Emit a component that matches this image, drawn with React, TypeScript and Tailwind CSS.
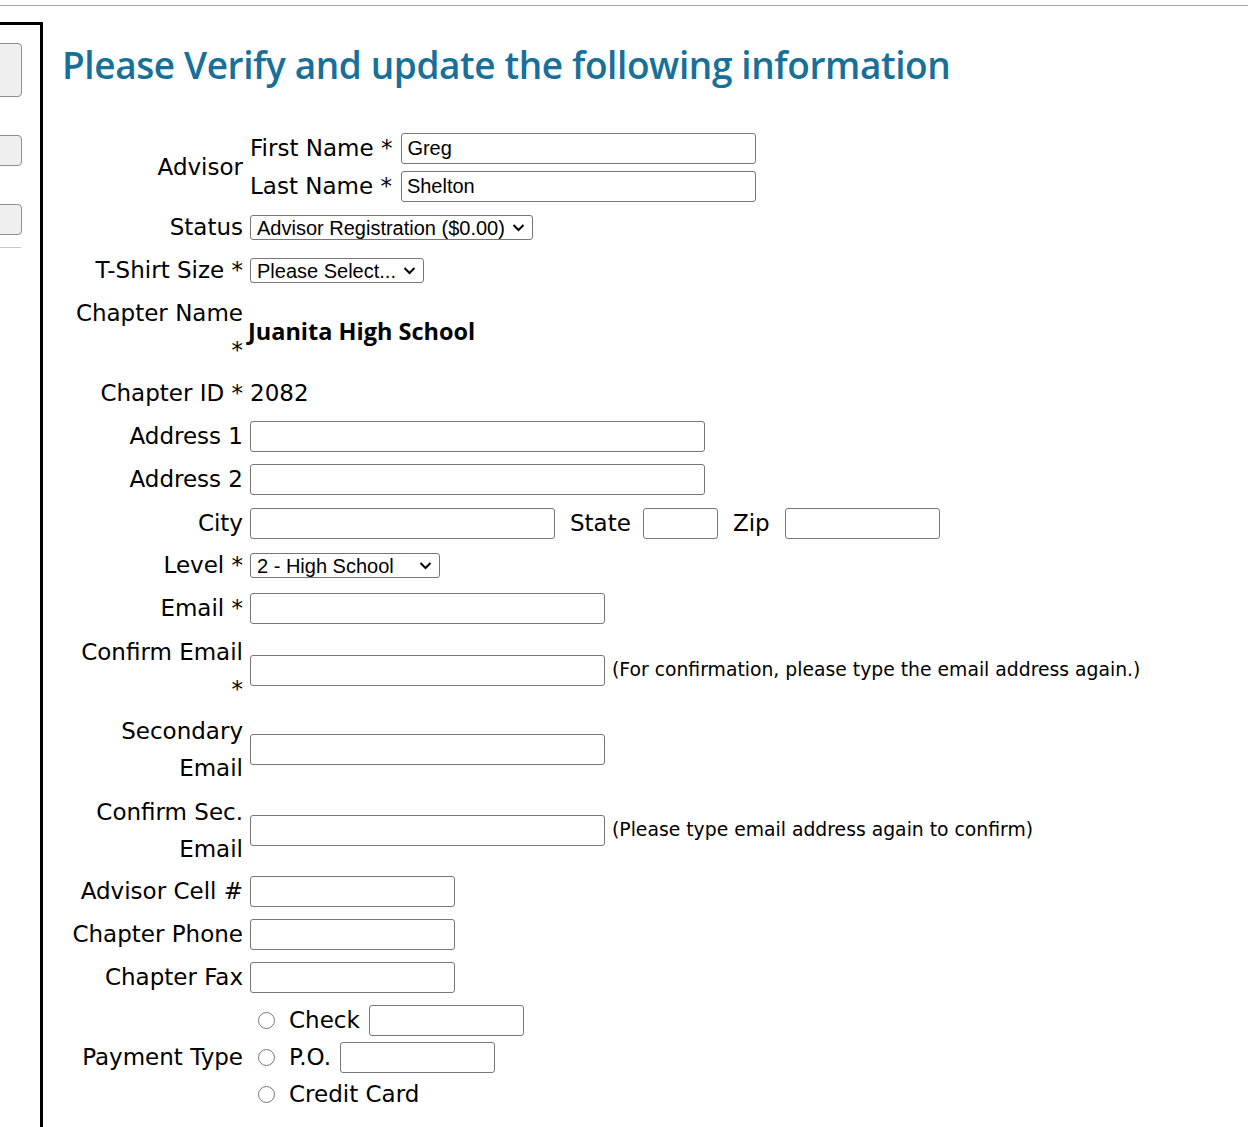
import React from "react";

const LBL = "font-['DejaVu_Sans',sans-serif] text-[23px] text-black";

function Input({ w, value }: { w: string; value?: string }) {
  return (
    <input
      type="text"
      defaultValue={value}
      className={`${w} h-[31px] border border-[#767676] rounded-[3px] bg-white px-[5px] font-['Liberation_Sans',Arial,sans-serif] text-[20px] text-black outline-none`}
    />
  );
}

function Chevron() {
  return (
    <svg width="13" height="9" viewBox="0 0 13 9" className="shrink-0">
      <path d="M1.5 2 L6.5 7 L11.5 2" fill="none" stroke="#000" strokeWidth="2" />
    </svg>
  );
}

function FakeSelect({ w, text }: { w: string; text: string }) {
  return (
    <div
      className={`${w} h-[25px] flex items-center justify-between border border-[#767676] rounded-[3px] bg-white pl-[6px] pr-[7px] font-['Liberation_Sans',Arial,sans-serif] text-[20px] leading-none text-black`}
    >
      <span className="whitespace-nowrap">{text}</span>
      <Chevron />
    </div>
  );
}

function Radio() {
  return <span className="block w-[17px] h-[17px] rounded-full border border-[#767676] bg-white shrink-0" />;
}

function Row({
  h,
  label,
  children,
  labelClass = "",
}: {
  h: string;
  label: React.ReactNode;
  children?: React.ReactNode;
  labelClass?: string;
}) {
  return (
    <div className={`grid grid-cols-[200px_1fr] gap-x-[7px] items-center ${h}`}>
      <div className={`${LBL} text-right whitespace-nowrap ${labelClass}`}>{label}</div>
      <div className="flex items-center min-w-0">{children}</div>
    </div>
  );
}

export default function App() {
  return (
    <div className="w-[1248px] h-[1127px] overflow-hidden bg-white">
      <div className="mt-[5px] h-px bg-[#a6a6a6]" />
      <div className="flex h-[1121px]">
        {/* left sidebar */}
        <div className="mt-[16px] w-[43px] shrink-0 border-t-[3px] border-r-[3px] border-black flex flex-col">
          <div className="mt-[18px] -ml-[12px] w-[34px] h-[54px] rounded-[4px] border border-[#8f8f8f] bg-[#efefef]" />
          <div className="mt-[38px] -ml-[12px] w-[34px] h-[31px] rounded-[4px] border border-[#8f8f8f] bg-[#efefef]" />
          <div className="mt-[38px] -ml-[12px] w-[34px] h-[31px] rounded-[4px] border border-[#8f8f8f] bg-[#efefef]" />
          <div className="mt-[12px] w-[21px] h-px bg-[#c8c8c8]" />
        </div>

        {/* main */}
        <div className="flex-1 flex flex-col">
          <h1 className="mt-[36px] ml-[19px] font-['Open_Sans',sans-serif] font-semibold text-[37px] tracking-[-0.4px] leading-[46px] text-[#17709a] whitespace-nowrap">
            Please Verify and update the following information
          </h1>

          <div className="mt-[42px] flex flex-col">
            {/* Advisor */}
            <Row h="h-[75px]" label="Advisor">
              <div className="flex flex-col">
                <div className="h-[37px] flex items-center gap-[9px]">
                  <span className={`${LBL} whitespace-nowrap`}>First Name *</span>
                  <Input w="w-[355px]" value="Greg" />
                </div>
                <div className="h-[38px] flex items-center gap-[9px]">
                  <span className={`${LBL} whitespace-nowrap`}>Last Name *</span>
                  <Input w="w-[355px]" value="Shelton" />
                </div>
              </div>
            </Row>

            <Row h="h-[45px]" label="Status">
              <FakeSelect w="w-[283px]" text="Advisor Registration ($0.00)" />
            </Row>

            <Row h="h-[41px]" label="T-Shirt Size *">
              <FakeSelect w="w-[174px]" text="Please Select..." />
            </Row>

            <Row
              h="h-[82px]"
              labelClass="leading-[37px]"
              label={
                <>
                  Chapter Name
                  <br />*
                </>
              }
            >
              <span className="-ml-[2px] font-['Open_Sans',sans-serif] font-bold text-[23.5px] text-black whitespace-nowrap">
                Juanita High School
              </span>
            </Row>

            <Row h="h-[41px]" label="Chapter ID *">
              <span className={LBL}>2082</span>
            </Row>

            <Row h="h-[44px]" label="Address 1">
              <Input w="w-[455px]" />
            </Row>

            <Row h="h-[43px]" label="Address 2">
              <Input w="w-[455px]" />
            </Row>

            <Row h="h-[45px]" label="City">
              <Input w="w-[305px]" />
              <span className={`${LBL} ml-[15px]`}>State</span>
              <span className="ml-[12px] flex">
                <Input w="w-[75px]" />
              </span>
              <span className={`${LBL} ml-[15px]`}>Zip</span>
              <span className="ml-[15px] flex">
                <Input w="w-[155px]" />
              </span>
            </Row>

            <Row h="h-[39px]" label="Level *">
              <FakeSelect w="w-[190px]" text="2 - High School" />
            </Row>

            <Row h="h-[47px]" label="Email *">
              <Input w="w-[355px]" />
            </Row>

            <Row
              h="h-[77px]"
              labelClass="leading-[37px]"
              label={
                <>
                  Confirm Email
                  <br />*
                </>
              }
            >
              <Input w="w-[355px]" />
              <span className="ml-[7px] font-['DejaVu_Sans',sans-serif] text-[18.8px] text-black whitespace-nowrap">
                (For confirmation, please type the email address again.)
              </span>
            </Row>

            <Row
              h="h-[81px]"
              labelClass="leading-[37px]"
              label={
                <>
                  Secondary
                  <br />
                  Email
                </>
              }
            >
              <Input w="w-[355px]" />
            </Row>

            <Row
              h="h-[81px]"
              labelClass="leading-[37px]"
              label={
                <>
                  Confirm Sec.
                  <br />
                  Email
                </>
              }
            >
              <Input w="w-[355px]" />
              <span className="ml-[7px] font-['DejaVu_Sans',sans-serif] text-[18.8px] text-black whitespace-nowrap">
                (Please type email address again to confirm)
              </span>
            </Row>

            <Row h="h-[41px]" label="Advisor Cell #">
              <Input w="w-[205px]" />
            </Row>

            <Row h="h-[45px]" label="Chapter Phone">
              <Input w="w-[205px]" />
            </Row>

            <Row h="h-[41px]" label="Chapter Fax">
              <Input w="w-[205px]" />
            </Row>

            <div className="pt-[4px]">
              <Row h="h-[111px]" label="Payment Type">
                <div className="flex flex-col">
                  <div className="h-[37px] flex items-center">
                    <span className="ml-[8px] flex">
                      <Radio />
                    </span>
                    <span className={`${LBL} ml-[14px]`}>Check</span>
                    <span className="ml-[9px] flex">
                      <Input w="w-[155px]" />
                    </span>
                  </div>
                  <div className="h-[37px] flex items-center">
                    <span className="ml-[8px] flex">
                      <Radio />
                    </span>
                    <span className={`${LBL} ml-[14px]`}>P.O.</span>
                    <span className="ml-[9px] flex">
                      <Input w="w-[155px]" />
                    </span>
                  </div>
                  <div className="h-[37px] flex items-center">
                    <span className="ml-[8px] flex">
                      <Radio />
                    </span>
                    <span className={`${LBL} ml-[14px]`}>Credit Card</span>
                  </div>
                </div>
              </Row>
            </div>
          </div>
        </div>
      </div>
    </div>
  );
}
